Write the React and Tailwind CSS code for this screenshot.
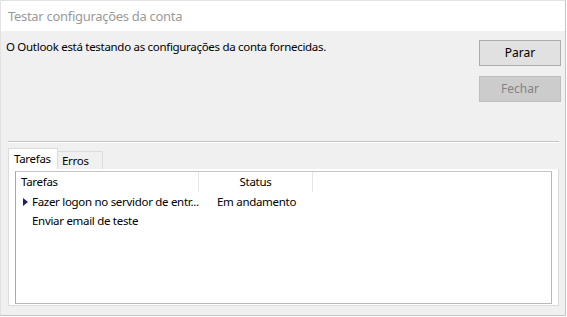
const font = { fontFamily: '"Noto Sans", "Open Sans", sans-serif' };

const TaskRow = ({ active, name, status }) => (
  <div className="flex h-[19px] items-center">
    <div className="w-[16px] flex justify-end pr-[4px]">
      {active && (
        <svg width="5" height="8" viewBox="0 0 5 8">
          <path d="M0 0 L5 4 L0 8 Z" fill="#1e1e6e" />
        </svg>
      )}
    </div>
    <div className="w-[167px] whitespace-nowrap overflow-hidden">{name}</div>
    <div className="pl-[18px]">{status}</div>
  </div>
);

export default function App() {
  return (
    <div
      className="w-[567px] h-[317px] bg-white text-[11.5px] text-black leading-[16px]"
      style={font}
    >
      <div className="w-[566px] h-[316px] flex flex-col border-t border-l border-[#e3e3e3] border-r border-b border-r-[#c4c4c4] border-b-[#c4c4c4]">
        <div className="h-[30px] bg-white flex items-center pl-[7px] text-[13px] text-[#9a9a9a] tracking-[-0.3px]">
          Testar configurações da conta
        </div>

        <div className="flex-1 bg-[#f0f0f0] flex flex-col">
          <div className="flex justify-between pl-[5px] pr-[4px]">
            <p className="pt-[8px] tracking-[-0.3px]">
              O Outlook está testando as configurações da conta fornecidas.
            </p>
            <div className="flex flex-col gap-[10px] pt-[9px]">
              <button className="w-[82px] h-[26px] bg-[#e1e1e1] border border-[#adadad] text-black text-[12px]">
                Parar
              </button>
              <button
                disabled
                className="w-[82px] h-[26px] bg-[#cccccc] border border-[#bfbfbf] text-[#838383] text-[12px]"
              >
                Fechar
              </button>
            </div>
          </div>

          <div className="mt-[39px] ml-[7px] mr-[6px] h-[2px] border-t border-[#c3c3c3] border-b border-b-white" />

          <div className="mt-[5px] ml-[7px] mr-[6px] flex flex-col flex-1 pb-[9px]">
            <div className="flex items-end h-[21px] tracking-[-0.3px]">
              <div className="h-[21px] w-[50px] px-[5px] bg-white border border-b-0 border-[#dcdcdc] flex items-center">
                Tarefas
              </div>
              <div className="h-[18px] px-[4px] w-[45px] bg-[#f0f0f0] border border-l-0 border-b-0 border-[#dcdcdc] flex items-center">
                Erros
              </div>
            </div>
            <div className="flex-1 bg-white border border-t-0 border-[#dcdcdc] pt-[2px] pl-[6px] pr-[6px] pb-[1px] flex">
              <div className="flex-1 border border-[#b9b9b9] border-l-[#a8a8a8] border-t-[#c4c4c4] tracking-[-0.3px]">
                <div className="flex h-[20px] items-center">
                  <div className="w-[183px] pl-[5px] h-full flex items-center border-r border-[#e6e6e6]">
                    Tarefas
                  </div>
                  <div className="w-[114px] h-full flex items-center justify-center border-r border-[#e6e6e6]">
                    Status
                  </div>
                </div>
                <TaskRow active name="Fazer logon no servidor de entr..." status="Em andamento" />
                <TaskRow name="Enviar email de teste" status="" />
              </div>
            </div>
          </div>
        </div>
      </div>
    </div>
  );
}
